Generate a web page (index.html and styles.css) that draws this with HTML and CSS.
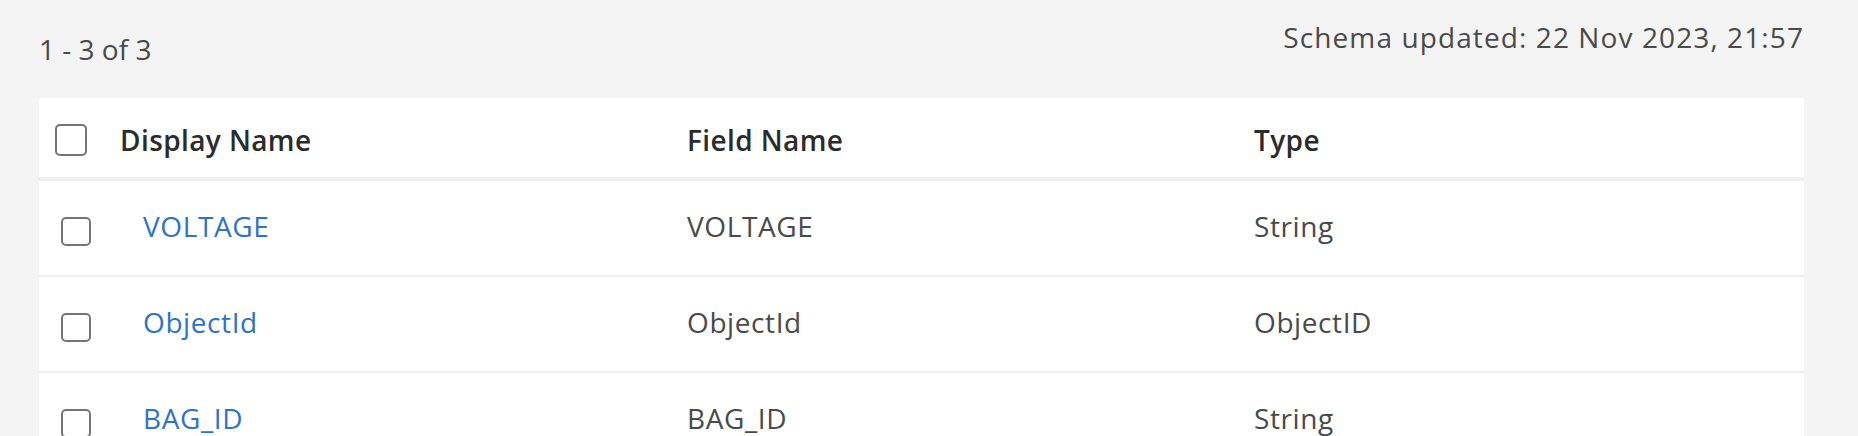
FILE: index.html
```html
<!DOCTYPE html>
<html lang="en">
<head>
<meta charset="utf-8">
<title>Fields</title>
<link rel="stylesheet" href="styles.css">
</head>
<body>
<div class="page">
  <div class="topbar">
    <div class="count">1 - 3 of 3</div>
    <div class="updated">Schema updated: 22 Nov 2023, 21:57</div>
  </div>
  <div class="card">
    <div class="row head">
      <div class="cell check"><span class="box"></span></div>
      <div class="cell">Display Name</div>
      <div class="cell">Field Name</div>
      <div class="cell">Type</div>
    </div>
    <div class="row">
      <div class="cell check"><span class="box"></span></div>
      <div class="cell name"><a href="#">VOLTAGE</a></div>
      <div class="cell">VOLTAGE</div>
      <div class="cell">String</div>
    </div>
    <div class="row">
      <div class="cell check"><span class="box"></span></div>
      <div class="cell name"><a href="#">ObjectId</a></div>
      <div class="cell">ObjectId</div>
      <div class="cell">ObjectID</div>
    </div>
    <div class="row">
      <div class="cell check"><span class="box"></span></div>
      <div class="cell name"><a href="#">BAG_ID</a></div>
      <div class="cell">BAG_ID</div>
      <div class="cell">String</div>
    </div>
  </div>
</div>
</body>
</html>
```
FILE: styles.css
```css
html, body {
  margin: 0;
  padding: 0;
  background: #f4f4f4;
}
body {
  font-family: "Open Sans", "Noto Sans", sans-serif;
  font-size: 28px;
  letter-spacing: 0.6px;
  color: #4a4a4a;
}
.page {
  padding: 0 54px 0 39px;
}
.topbar {
  display: flex;
  justify-content: space-between;
  align-items: flex-start;
  height: 98px;
}
.count {
  padding-top: 31px;
  line-height: 36px;
  letter-spacing: 0;
  color: #4a4a4a;
}
.updated {
  padding-top: 19px;
  line-height: 36px;
  letter-spacing: 1.1px;
  color: #4a4a4a;
}
.card {
  background: #fff;
}
.row {
  display: grid;
  grid-template-columns: 81px 567px 567px 1fr;
  align-items: center;
  height: 94px;
  border-bottom: 2px solid #efefef;
}
.row .cell {
  padding-bottom: 5px;
}
.row.head {
  height: 79px;
  border-bottom: 4px solid #efefef;
  color: #2b2b2b;
  font-weight: 600;
  letter-spacing: 0.4px;
}
.row.head .cell {
  padding-bottom: 0;
  padding-top: 5px;
}
.cell {
  white-space: nowrap;
}
.row .check {
  display: flex;
  padding-left: 22px;
  padding-top: 6px;
  padding-bottom: 0;
}
.row.head .check {
  padding-left: 16px;
  padding-top: 4px;
}
.box {
  display: block;
  width: 26px;
  height: 25px;
  border: 2px solid #757575;
  border-radius: 5px;
}
.head .box {
  width: 28px;
  height: 28px;
}
.name {
  padding-left: 23px;
}
.name a {
  color: #2f74c0;
  text-decoration: none;
}
```
